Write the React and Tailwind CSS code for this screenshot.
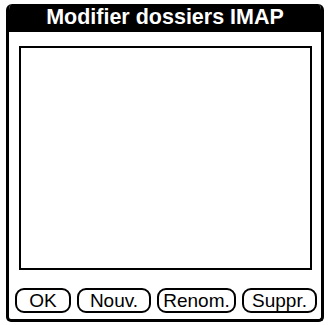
export default function App() {
  const btn =
    "h-[25px] border-2 border-black rounded-[9px] flex items-center justify-center text-[19px] leading-none text-black bg-white pb-[1px]";
  return (
    <div className="w-[329px] h-[325px] bg-white pt-[4px] pl-[6px]" style={{ fontFamily: '"Liberation Sans", Arial, sans-serif' }}>
      <div className="w-[318px] h-[318px] flex flex-col bg-white border-l-[3px] border-r-[3px] border-b-[3px] border-black rounded-t-[6px] rounded-b-[5px] overflow-hidden">
        <div className="h-[28px] bg-black flex items-center justify-center shrink-0">
          <span className="text-white font-bold text-[21.5px] leading-none">Modifier dossiers IMAP</span>
        </div>
        <div className="flex flex-col flex-1 pl-[10px] pr-[9px] pt-[14px]">
          <div className="h-[224px] border-2 border-black bg-white" />
        </div>
        <div className="flex pl-[6px] gap-[6px] pb-[6px]">
          <div className={btn + " w-[56px]"}>OK</div>
          <div className={btn + " w-[74px]"}>Nouv.</div>
          <div className={btn + " w-[79px]"}>Renom.</div>
          <div className={btn + " w-[75px]"}>Suppr.</div>
        </div>
      </div>
    </div>
  );
}
